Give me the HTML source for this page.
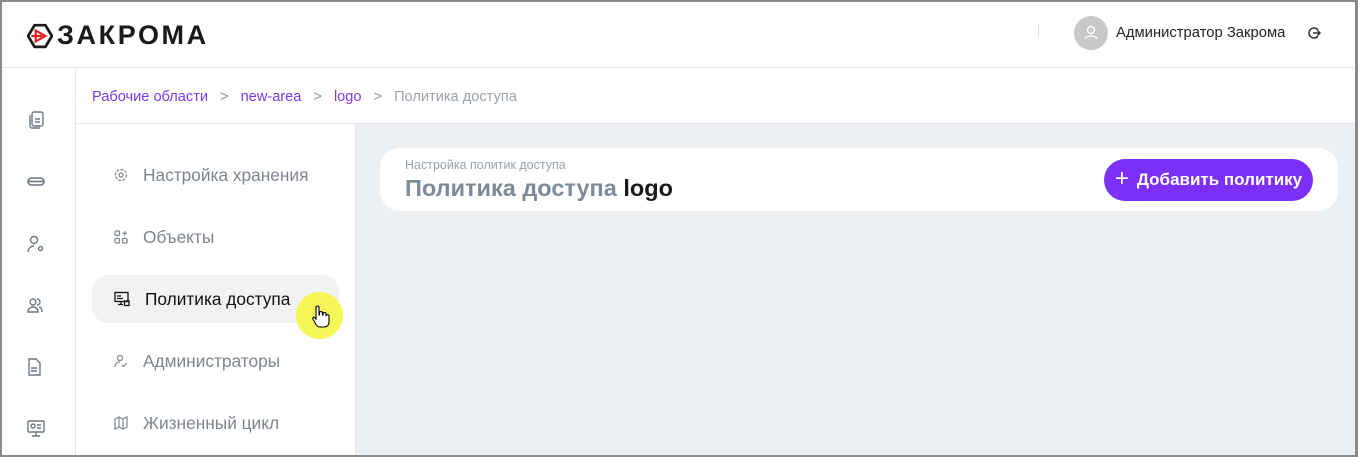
<!DOCTYPE html>
<html><head><meta charset="utf-8"><style>
*{margin:0;padding:0;box-sizing:border-box}
body{width:1358px;height:457px;overflow:hidden;font-family:"Liberation Sans",sans-serif;background:#fff;position:relative}
.frame{position:absolute;inset:0;border:2px solid #8a8a8a;border-right-width:3px;pointer-events:none;z-index:10}
.hdr{position:absolute;left:0;top:0;width:1358px;height:68px;border-bottom:1px solid #e3e6ea;background:#fff}
.logo{position:absolute;left:27px;top:22px;display:flex;align-items:center;gap:4px}
.logo span{font-weight:bold;font-size:27px;color:#1a1a1a;letter-spacing:2.6px;line-height:27px}
.side{position:absolute;left:0;top:68px;width:76px;height:389px;border-right:1px solid #e3e6ea}
.side svg{position:absolute;left:26px}
.crumb{position:absolute;left:76px;top:68px;right:0;height:56px;border-bottom:1px solid #e3e6ea;font-size:14.6px;padding:20px 0 0 16px;color:#7c3aed}
.crumb .s{color:#8a94a0;margin:0 12px}
.crumb .g{color:#9aa3ad}
.menu{position:absolute;left:76px;top:124px;width:280px;height:333px;border-right:1px solid #e3e6ea}
.it{position:absolute;left:16px;width:247px;height:48px;border-radius:16px;display:flex;align-items:center;padding-left:22px;font-size:17.3px;color:#7d8590}
.it svg{margin-right:15px}
.it.a{background:#f1f2f4;color:#111}
.main{position:absolute;left:356px;top:124px;right:0;bottom:0;background:#edf0f3}
.card{position:absolute;left:24px;top:24px;width:958px;height:63px;background:#fff;border-radius:20px}
.card .t1{position:absolute;left:25px;top:10px;font-size:12.5px;color:#9aa3ad}
.card .t2{position:absolute;left:25px;top:27px;font-size:23.5px;font-weight:bold;color:#7d8a98}
.card .t2 b{color:#1a1a1a}
.btn{position:absolute;right:25px;top:11px;width:209px;height:42px;border-radius:21px;background:#7b2ff7;color:#fff;font-size:17px;font-weight:bold;display:flex;align-items:center;justify-content:center}
</style></head><body>
<div class="hdr">
 <div class="logo">
  <svg width="26" height="26" viewBox="0 0 24 24"><path d="M7 2h10l6 10-6 10H7L1 12z" fill="none" stroke="#1a1a1a" stroke-width="2.5"/><path d="M8 7l9 5-9 5z" fill="none" stroke="#e02020" stroke-width="2"/><path d="M4 12h10" stroke="#e02020" stroke-width="2"/></svg>
  <span>ЗАКРОМА</span>
 </div>
 <div style="position:absolute;left:1038px;top:24px;width:1px;height:14px;background:#e3e6ea"></div>
 <div style="position:absolute;left:1074px;top:16px;width:34px;height:34px;border-radius:50%;background:#c8c8c8"><svg width="34" height="34" viewBox="0 0 34 34"><circle cx="17" cy="14" r="3.5" fill="none" stroke="#fff" stroke-width="1.4"/><path d="M11 23c1-4 11-4 12 0" fill="none" stroke="#fff" stroke-width="1.4"/></svg></div>
 <div style="position:absolute;left:1116px;top:25px;font-size:14.8px;color:#222">Администратор Закрома</div>
 <svg style="position:absolute;left:1307px;top:26px" width="14" height="14" viewBox="0 0 14 14"><path d="M11 4A5 5 0 1 0 11 10" fill="none" stroke="#333" stroke-width="1.5"/><path d="M6 7h7M10.5 4.5L13 7l-2.5 2.5" fill="none" stroke="#333" stroke-width="1.5"/></svg>
</div>
<div class="side">
 <svg style="top:42px" width="20" height="20" viewBox="0 0 20 20" fill="none" stroke="#6e7782" stroke-width="1.4"><rect x="6" y="2" width="11" height="14" rx="2"/><path d="M4 5v11a2 2 0 0 0 2 2h8M9 9h5M9 12h5"/></svg>
 <svg style="top:106px" width="20" height="16" viewBox="0 0 20 16" fill="none" stroke="#6e7782" stroke-width="1.6"><rect x="2" y="4" width="16" height="7" rx="3.5"/><path d="M2.5 7.5h15"/></svg>
 <svg style="top:166px" width="20" height="20" viewBox="0 0 20 20" fill="none" stroke="#6e7782" stroke-width="1.4"><circle cx="8" cy="6" r="3.5"/><path d="M2 18c0-4 3-6 6-6"/><circle cx="14.5" cy="14.5" r="2"/></svg>
 <svg style="top:228px" width="18" height="18" viewBox="0 0 18 18" fill="none" stroke="#6e7782" stroke-width="1.4"><circle cx="7" cy="6" r="3"/><path d="M2 16c0-3 2-5 5-5s5 2 5 5zM11 3a3 3 0 0 1 0 6M13 11c2 0 3 2 3 5"/></svg>
 <svg style="top:290px" width="16" height="18" viewBox="0 0 16 18" fill="none" stroke="#6e7782" stroke-width="1.4"><path d="M3 1h7l4 4v12H3zM5 10h6M5 13h6"/></svg>
 <svg style="top:351px" width="20" height="20" viewBox="0 0 20 20" fill="none" stroke="#6e7782" stroke-width="1.4"><rect x="2" y="2" width="16" height="11" rx="1"/><circle cx="7" cy="7" r="2"/><path d="M11 6h4M11 9h4M10 13v4M6 17h8"/></svg>
</div>
<div class="crumb" style="padding-top:21px">Рабочие области<span class="s">&gt;</span>new-area<span class="s">&gt;</span>logo<span class="s">&gt;</span><span class="g">Политика доступа</span></div>
<div class="menu">
 <div class="it" style="top:27px"><svg width="14" height="14" viewBox="0 0 14 14" fill="none" stroke="#7d8590" stroke-width="1.2"><circle cx="7" cy="7" r="2"/><circle cx="7" cy="7" r="5.5" stroke-dasharray="3 1.2"/></svg>Настройка хранения</div>
 <div class="it" style="top:89px"><svg width="14" height="14" viewBox="0 0 14 14" fill="none" stroke="#7d8590" stroke-width="1.2"><rect x="1" y="1" width="4.5" height="4.5" rx="1"/><rect x="1" y="8.5" width="4.5" height="4.5" rx="1"/><rect x="8.5" y="8.5" width="4.5" height="4.5" rx="1"/><path d="M10.75 1v4.5M8.5 3.25h4.5"/></svg>Объекты</div>
 <div class="it a" style="top:151px"><svg width="16" height="16" viewBox="0 0 16 16" fill="none" stroke="#111" stroke-width="1.3"><rect x="1" y="1.5" width="13" height="9"/><path d="M3 5h4M3 7.5h6M7 10.5v3M4 13.5h5"/><rect x="10.5" y="10" width="4.5" height="4.5"/></svg>Политика доступа</div>
 <div class="it" style="top:213px"><svg width="14" height="14" viewBox="0 0 14 14" fill="none" stroke="#7d8590" stroke-width="1.2"><circle cx="6" cy="4" r="2.5"/><path d="M1 13c0-3 2-5 5-5M8 11l1.5 1.5L13 9"/></svg>Администраторы</div>
 <div class="it" style="top:275px"><svg width="14" height="14" viewBox="0 0 14 14" fill="none" stroke="#7d8590" stroke-width="1.2"><path d="M1 3l4-2 4 2 4-2v10l-4 2-4-2-4 2zM5 1v10M9 3v10"/></svg>Жизненный цикл</div>
</div>
<div class="main">
 <div class="card">
  <div class="t1">Настройка политик доступа</div>
  <div class="t2">Политика доступа <b>logo</b></div>
  <div class="btn"><span style="font-size:24px;font-weight:normal;margin-right:8px;margin-top:-3px">+</span>Добавить политику</div>
 </div>
</div>
<div style="position:absolute;left:296px;top:292px;width:47px;height:47px;border-radius:50%;background:#f5f545;opacity:.9"></div>
<svg style="position:absolute;left:311px;top:305px" width="20" height="24" viewBox="0 0 20 24"><path d="M5 2.5a1.5 1.5 0 0 1 3 0V10h.5V8a1.5 1.5 0 0 1 3 0v2h.5V9a1.5 1.5 0 0 1 3 0v1.5h.3a1.4 1.4 0 0 1 2.7.5V17c0 3-2 5-5 5H9c-2 0-3-1-4-2.5L2 14c-.8-1.2.8-2.4 1.8-1.4L5 14z" fill="#fff" stroke="#000" stroke-width="1.1"/></svg>
<div class="frame"></div>
</body></html>
